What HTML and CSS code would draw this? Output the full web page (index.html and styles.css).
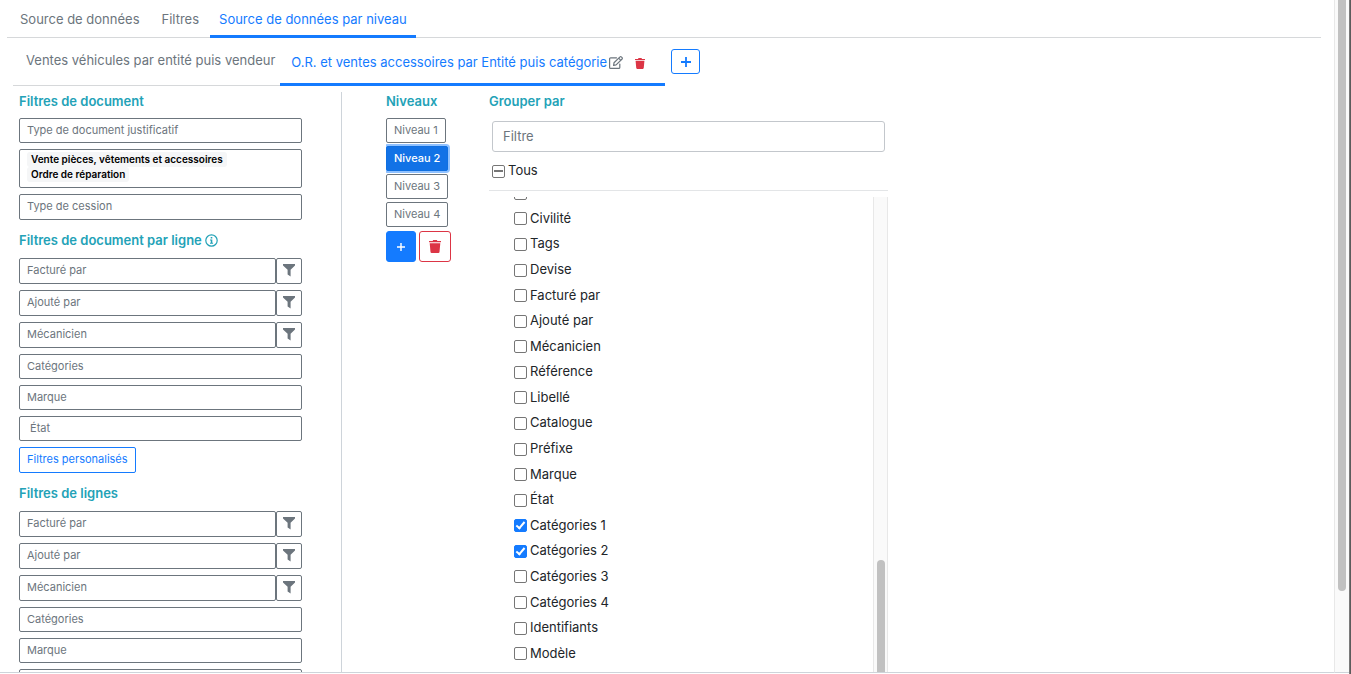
FILE: index.html
```
<!DOCTYPE html>
<html lang="fr">
<head>
<meta charset="utf-8">
<title>Source de données par niveau</title>
<link rel="stylesheet" href="styles.css">
</head>
<body>
<svg class="sprite" aria-hidden="true">
  <symbol id="i-funnel" viewBox="0 0 12 13"><path d="M0 0h12v1.400L7.600 5.800V12.400L4.600 10.400V5.800L0 1.400z"/></symbol>
  <symbol id="i-trash" viewBox="0 0 12 13"><path d="M0 1h3.600L4.200 0h3.600l.6 1H12v1.200H0zM.7 3.200h10.600L10.500 12a1.100 1.100 0 0 1-1.100 1H2.600a1.100 1.100 0 0 1-1.100-1z"/></symbol>
  <symbol id="i-plus" viewBox="0 0 10 10"><path d="M4.100 0h1.800v4.100H10v1.800H5.900V10H4.100V5.900H0V4.100h4.100z"/></symbol>
  <symbol id="i-edit" viewBox="0 0 14 13"><g fill="none" stroke="currentColor" stroke-width="1.200" stroke-linejoin="round" stroke-linecap="round"><path d="M7.500 1.800H1.600a1 1 0 0 0-1 1v8.600a1 1 0 0 0 1 1h8.200a1 1 0 0 0 1-1V8"/><path d="M4.600 9.300l.4-2.500L11 .9a.9.900 0 0 1 1.300 0l.8.8a.9.900 0 0 1 0 1.300L7.100 8.900zM9.700 2.200l2.100 2.100"/></g></symbol>
  <symbol id="i-info" viewBox="0 0 13 13"><circle cx="6.500" cy="6.500" r="5.700" fill="none" stroke="currentColor" stroke-width="1.200"/><path d="M5.700 2.900h1.600v1.600H5.700zM5 5.400h2.300v3.400h.8v1H5v-1h.8V6.400H5z"/></symbol>
</svg>
<div class="app">
  <main class="page">
    <nav class="tabs">
      <a class="tab" href="#source">Source de données</a>
      <a class="tab" href="#filtres">Filtres</a>
      <a class="tab active" href="#niveau">Source de données par niveau</a>
    </nav>
    <div class="subtabs">
      <a class="subtab" href="#vehicules">Ventes véhicules par entité puis vendeur</a>
      <div class="subtab active">
        <a href="#or">O.R. et ventes accessoires par Entité puis catégorie</a>
        <button class="bare edit" aria-label="Modifier"><svg width="14" height="13"><use href="#i-edit"/></svg></button>
        <button class="bare remove" aria-label="Supprimer"><svg width="10" height="11"><use href="#i-trash"/></svg></button>
      </div>
      <button class="add-tab" aria-label="Ajouter"><svg width="10" height="10"><use href="#i-plus"/></svg></button>
    </div>
    <div class="content">
      <aside class="filters">
        <section>
          <h2>Filtres de document</h2>
          <button class="field">Type de document justificatif</button>
          <button class="field chosen"><span class="badge">Vente pièces, vêtements et accessoires</span><span class="badge">Ordre de réparation</span></button>
          <button class="field tall">Type de cession</button>
        </section>
        <section>
          <h2>Filtres de document par ligne <svg width="13" height="13"><use href="#i-info"/></svg></h2>
          <div class="pair"><button class="field">Facturé par</button><button class="field funnel" aria-label="Filtrer Facturé par"><svg width="12" height="13"><use href="#i-funnel"/></svg></button></div>
          <div class="pair"><button class="field">Ajouté par</button><button class="field funnel" aria-label="Filtrer Ajouté par"><svg width="12" height="13"><use href="#i-funnel"/></svg></button></div>
          <div class="pair"><button class="field">Mécanicien</button><button class="field funnel" aria-label="Filtrer Mécanicien"><svg width="12" height="13"><use href="#i-funnel"/></svg></button></div>
          <button class="field">Catégories</button>
          <button class="field">Marque</button>
          <button class="field">&nbsp;État</button>
          <button class="field tall custom">Filtres personalisés</button>
        </section>
        <section>
          <h2>Filtres de lignes</h2>
          <div class="pair"><button class="field">Facturé par</button><button class="field funnel" aria-label="Filtrer Facturé par"><svg width="12" height="13"><use href="#i-funnel"/></svg></button></div>
          <div class="pair"><button class="field">Ajouté par</button><button class="field funnel" aria-label="Filtrer Ajouté par"><svg width="12" height="13"><use href="#i-funnel"/></svg></button></div>
          <div class="pair"><button class="field">Mécanicien</button><button class="field funnel" aria-label="Filtrer Mécanicien"><svg width="12" height="13"><use href="#i-funnel"/></svg></button></div>
          <button class="field">Catégories</button>
          <button class="field">Marque</button>
          <button class="field"></button>
        </section>
      </aside>
      <section class="levels">
        <h2>Niveaux</h2>
        <button class="field">Niveau 1</button>
        <button class="field current">Niveau 2</button>
        <button class="field">Niveau 3</button>
        <button class="field">Niveau 4</button>
        <div class="level-actions">
          <button class="add" aria-label="Ajouter un niveau"><svg width="8" height="8"><use href="#i-plus"/></svg></button>
          <button class="delete" aria-label="Supprimer le niveau"><svg width="12" height="13"><use href="#i-trash"/></svg></button>
        </div>
      </section>
      <section class="group">
        <h2>Grouper par</h2>
        <input class="search" type="text" placeholder="Filtre" aria-label="Filtre">
        <label class="check all"><input type="checkbox" class="partial">Tous</label>
        <div class="list">
          <div class="options">
            <label class="check"><input type="checkbox">Genre</label>
            <label class="check"><input type="checkbox">Civilité</label>
            <label class="check"><input type="checkbox">Tags</label>
            <label class="check"><input type="checkbox">Devise</label>
            <label class="check"><input type="checkbox">Facturé par</label>
            <label class="check"><input type="checkbox">Ajouté par</label>
            <label class="check"><input type="checkbox">Mécanicien</label>
            <label class="check"><input type="checkbox">Référence</label>
            <label class="check"><input type="checkbox">Libellé</label>
            <label class="check"><input type="checkbox">Catalogue</label>
            <label class="check"><input type="checkbox">Préfixe</label>
            <label class="check"><input type="checkbox">Marque</label>
            <label class="check"><input type="checkbox">État</label>
            <label class="check"><input type="checkbox" checked>Catégories 1</label>
            <label class="check"><input type="checkbox" checked>Catégories 2</label>
            <label class="check"><input type="checkbox">Catégories 3</label>
            <label class="check"><input type="checkbox">Catégories 4</label>
            <label class="check"><input type="checkbox">Identifiants</label>
            <label class="check"><input type="checkbox">Modèle</label>
          </div>
          <div class="track lower"><div class="thumb"></div></div>
        </div>
      </section>
    </div>
  </main>
  <div class="track main-track"><div class="thumb"></div></div>
  <div class="edge"></div>
</div>
</body>
</html>
```
FILE: styles.css
```
*, *::before, *::after { box-sizing: border-box; }
body {
  margin: 0;
  background: #fff;
  color: #212529;
  font: 13px/20px Inter, "Liberation Sans", sans-serif;
}
button, input { font: inherit; margin: 0; }
button { cursor: pointer; background: #fff; }
a { color: inherit; text-decoration: none; }
svg { fill: currentColor; display: block; }
.sprite { position: absolute; width: 0; height: 0; }

.app { display: flex; height: 100vh; padding-bottom: 1px; }
.page {
  flex: 1;
  min-width: 0;
  display: flex;
  flex-direction: column;
  overflow: hidden;
  border-bottom: 1px solid #ced4da;
}

.tabs {
  display: flex;
  flex: none;
  margin: 0 13px 0 7px;
  padding-left: 2px;
  height: 38px;
  border-bottom: 1px solid #d6d8da;
  color: #6c757d;
}
.tab { height: 38px; padding: 9px 11px 0; }
.tab.active, .subtab.active { color: #147bff; border-bottom: 3px solid #147bff; }
.tab.active { padding: 9px 9px 0; }

.subtabs { display: flex; flex: none; padding-left: 13px; height: 48px; color: #6c757d; }
.subtab { padding: 12px 5px 0 13px; border-bottom: 1px solid #d6d8da; }
.subtab.active { display: flex; align-items: center; padding: 3px 20px 0 11px; }
.bare { border: 0; padding: 0; background: none; }
.edit { margin-left: 2px; color: #6c757d; }
.remove { margin: 3px 0 0 12px; color: #dc3545; }
.add-tab {
  display: grid;
  place-items: center;
  width: 29px;
  height: 25px;
  margin: 11px 0 0 6px;
  border: 1px solid #147bff;
  border-radius: 3px;
  color: #147bff;
}

.content { flex: 1; min-height: 0; display: flex; padding: 6px 0 0 19px; }
h2 {
  display: flex;
  align-items: center;
  gap: 3px;
  margin: 0;
  padding-bottom: 2px;
  font-size: 13px;
  line-height: 18px;
  font-weight: 600;
  color: #23a2b7;
}
.filters {
  flex: none;
  width: 323px;
  padding-right: 39px;
  border-right: 1px solid #ced4da;
  overflow: hidden;
}
.filters section { display: flex; flex-direction: column; gap: 6px; margin-bottom: 11px; }
.filters section + section h2 { margin-bottom: 1px; }
.field {
  min-height: 25px;
  padding: 0 7px 2px;
  border: 1px solid #6c757d;
  border-radius: 2px;
  color: #6c757d;
  font-size: 11px;
  line-height: 16px;
  text-align: left;
}
.chosen { display: flex; flex-direction: column; align-items: flex-start; padding: 2px 7px 5px; }
.badge {
  padding: 0 4px;
  border-radius: 3px;
  background: #f5f6f7;
  color: #000;
  font-size: 10px;
  font-weight: 600;
  line-height: 15px;
}
.tall { min-height: 26px; }
.pair { display: flex; height: 26px; }
.pair .field { flex: 1; }
.pair .funnel { flex: none; width: 26px; padding: 0 6px 2px; }
.custom { align-self: flex-start; border-color: #147bff; color: #147bff; }

.levels {
  flex: none;
  display: flex;
  flex-direction: column;
  align-items: flex-start;
  gap: 3px;
  width: 103px;
  margin-left: 44px;
  overflow: hidden;
}
.levels h2 { margin-bottom: 3px; }
.levels .current {
  border-color: #0f6fe0;
  background: #1272e6;
  color: #fff;
  font-weight: 500;
  box-shadow: 0 0 0 2px #8fc1ff;
}
.level-actions { display: flex; gap: 3px; margin-top: 1px; }
.add, .delete { display: grid; place-items: center; height: 31px; padding: 0; border-radius: 3px; }
.add { width: 30px; border: 1px solid #147bff; background: #147bff; color: #fff; }
.delete { width: 32px; border: 1px solid #dc3545; color: #dc3545; }

.group { flex: none; display: flex; flex-direction: column; width: 399px; }
.search {
  height: 31px;
  margin: 9px 3px 0;
  padding: 0 10px 1px;
  border: 1px solid #c3c7cc;
  border-radius: 3px;
  color: #495057;
}
.search::placeholder { color: #6c757d; opacity: 1; }
.check { display: flex; align-items: center; gap: 3px; padding-bottom: 1px; }
.check input {
  appearance: none;
  flex: none;
  display: grid;
  place-items: center;
  width: 13px;
  height: 13px;
  margin-top: 2px;
  border: 1px solid #767676;
  border-radius: 2px;
  background: #fff;
}
.check input:checked { border-color: #147bff; background: #147bff; }
.check input:checked::after {
  content: "";
  width: 5px;
  height: 9px;
  margin-bottom: 2px;
  border: solid #fff;
  border-width: 0 2px 2px 0;
  transform: rotate(40deg);
}
.check .partial::after { content: ""; width: 9px; height: 2px; background: #767676; }
.all { flex: none; height: 39px; padding: 0 3px 2px; border-bottom: 1px solid #e3e5e7; }
.list { flex: 1; min-height: 0; display: flex; margin-top: 6px; overflow: hidden; }
/* The option list is scrolled part of the way into its first row. */
.options { flex: 1; display: flex; flex-direction: column; margin: -17px 0 6px; padding-left: 25px; }
.options .check { flex: 1 0 25px; }

.track { flex: none; width: 15px; background: #fafafa; border: solid #e8e8e8; border-width: 0 1px; }
.thumb { width: 8px; margin: 0 auto; background: #c1c1c1; }
.lower { display: flex; align-items: flex-end; }
.lower .thumb { height: 112px; border-radius: 4px 4px 0 0; }
.main-track { border-bottom: 1px solid #ced4da; border-right: 0; }
.main-track .thumb { height: 88%; margin-left: 3px; border-radius: 0 0 4px 4px; }
.edge { flex: none; width: 2px; margin-bottom: -1px; background: linear-gradient(90deg, #8a8a8a, #4c4c4c); }
```
